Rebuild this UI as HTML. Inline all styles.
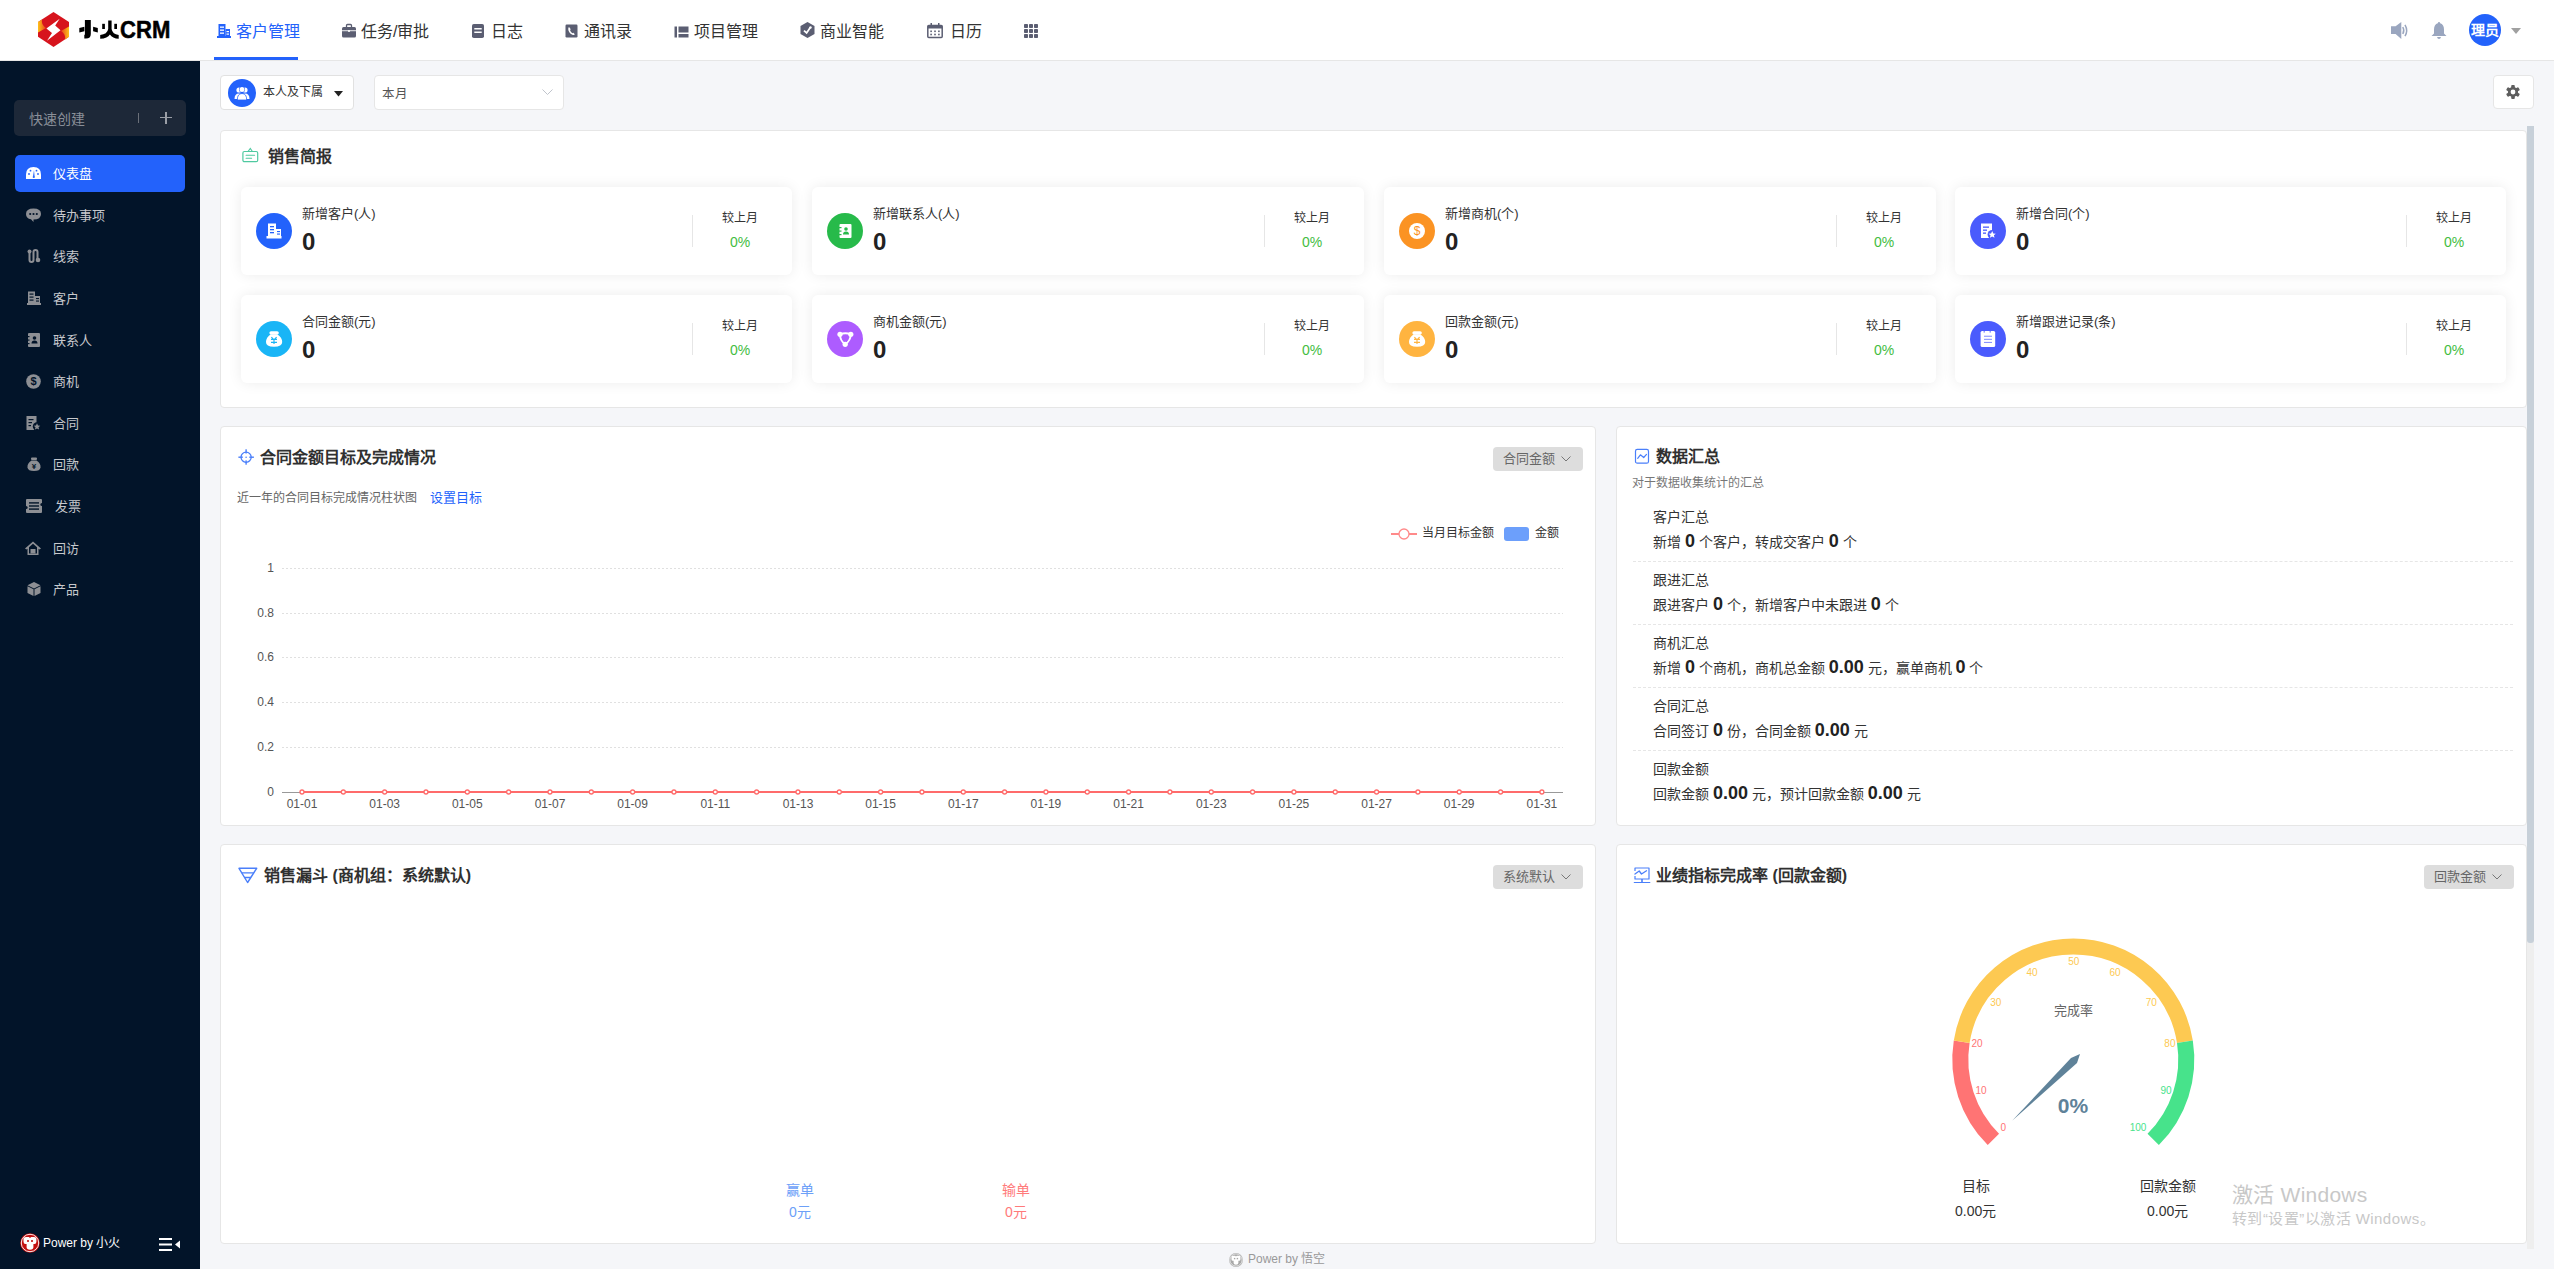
<!DOCTYPE html><html lang="zh-CN"><head><meta charset="utf-8"><style>
*{box-sizing:border-box}
html,body{margin:0;padding:0}
body{width:2554px;height:1269px;overflow:hidden;position:relative;background:#f5f6f9;font-family:"Liberation Sans",sans-serif;}
.t{position:absolute;white-space:nowrap}
.a{position:absolute}
.card{position:absolute;background:#fff;border:1px solid #e6e6e6;border-radius:4px}
.sc{position:absolute;background:#fff;border-radius:6px;box-shadow:0 0 14px rgba(0,0,0,0.08)}
svg{position:absolute;overflow:visible}
</style></head><body>
<div class="a" style="left:0;top:0;width:2554px;height:61px;background:#fff;border-bottom:1px solid #e6e6e6"></div>
<svg style="left:38px;top:12px" width="32" height="35" viewBox="0 0 32 35">
<defs><linearGradient id="lg1" x1="0" y1="0" x2="1" y2="0"><stop offset="0" stop-color="#ffc21a"/><stop offset="1" stop-color="#e8441a"/></linearGradient>
<linearGradient id="lg2" x1="1" y1="0" x2="0" y2="0"><stop offset="0" stop-color="#ffc21a"/><stop offset="1" stop-color="#e8441a"/></linearGradient></defs>
<polygon points="15.5,0 31,10 31,24.7 15.5,35 0,24.7 0,10" fill="#d7141d"/>
<path d="M0,10 L4,7.5 Q3,13 8,16 L0,20.5 Z" fill="url(#lg1)"/>
<path d="M31,24.7 L27,27.5 Q28,22 23,19 L31,14.5 Z" fill="url(#lg2)"/>
<polygon points="21.7,6.8 8.4,16.5 14,21 9,28.8 22.5,18.2 17.2,13.5" fill="#fff"/>
</svg>
<svg style="left:79px;top:20px" width="42" height="20" viewBox="0 0 42 20"><g fill="#000">
<path d="M5.9,0 H11.8 V14 Q11.8,18.6 7,18.6 H5.3 V14.8 H5.9 Z"/>
<polygon points="0.3,8 5.4,6.7 5.4,11.2 0.3,12.6"/><polygon points="14.1,6.7 18.8,8 18.8,12.6 14.1,11.2"/>
<rect x="23.2" y="3.8" width="2.7" height="5.2"/><rect x="35.3" y="3.8" width="2.7" height="5.2"/>
<path d="M29.2,0.4 H32.6 V9 Q33.5,14.3 39.7,15 V18.8 Q33.5,18.5 30.9,14.5 Q28.5,18.5 21.2,18.8 V15 Q28.3,14.3 29.2,9 Z"/></g></svg>
<div class="t" style="left:120px;top:15px;font-size:24px;line-height:30px;color:#000;font-weight:bold;transform:scaleX(0.92);transform-origin:0 0;-webkit-text-stroke:0.5px #000">CRM</div>
<svg style="left:217px;top:24px" width="14" height="14" viewBox="0 0 14 14">
<rect x="1.5" y="0" width="7" height="12.5" fill="#2362fb"/><rect x="8.5" y="5" width="4.5" height="7.5" fill="#2362fb"/><rect x="0" y="12" width="14" height="2" fill="#2362fb"/>
<rect x="3" y="2.5" width="4" height="1.3" fill="#fff"/><rect x="3" y="5.5" width="4" height="1.3" fill="#fff"/><rect x="3" y="8.5" width="4" height="1.3" fill="#fff"/>
<rect x="9.5" y="7" width="2.5" height="1.2" fill="#fff"/><rect x="9.5" y="9.5" width="2.5" height="1.2" fill="#fff"/></svg>
<div class="t" style="left:236px;top:24px;font-size:16px;line-height:16px;color:#2362fb;font-weight:normal;">客户管理</div>
<div class="a" style="left:214px;top:57px;width:84px;height:3px;background:#2362fb"></div>
<svg style="left:341.5px;top:24px" width="14" height="14" viewBox="0 0 14 14">
<path d="M4.5,3 V1.5 Q4.5,0.5 5.5,0.5 H8.5 Q9.5,0.5 9.5,1.5 V3" stroke="#5b5e72" stroke-width="1.3" fill="none"/>
<rect x="0" y="3" width="14" height="10.5" rx="1.5" fill="#5b5e72"/><rect x="0" y="6.3" width="14" height="0.9" fill="#fff"/><circle cx="7" cy="7" r="1.1" fill="#fff"/></svg>
<div class="t" style="left:361px;top:24px;font-size:16px;line-height:16px;color:#333;font-weight:normal;">任务/审批</div>
<svg style="left:472px;top:24px" width="12" height="14" viewBox="0 0 12 14">
<rect x="0" y="0" width="12" height="14" rx="1.8" fill="#5b5e72"/><rect x="2.3" y="4" width="7.4" height="1.5" fill="#fff"/><rect x="2.3" y="7.5" width="7.4" height="1.5" fill="#fff"/></svg>
<div class="t" style="left:491px;top:24px;font-size:16px;line-height:16px;color:#333;font-weight:normal;">日志</div>
<svg style="left:565px;top:24px" width="13" height="14" viewBox="0 0 13 14">
<rect x="0.5" y="0.5" width="12" height="13" rx="1.2" fill="#5b5e72"/>
<path d="M4,3 Q3,3.5 3.3,6 Q4.5,10 8,11 Q9.5,11.2 9.8,10.3 L8.3,8.7 L7.3,9.3 Q5.5,8 5,6 L5.8,5.2 Z" fill="#fff"/></svg>
<div class="t" style="left:584px;top:24px;font-size:16px;line-height:16px;color:#333;font-weight:normal;">通讯录</div>
<svg style="left:673.5px;top:24px" width="15" height="14" viewBox="0 0 15 14">
<rect x="0.5" y="2.5" width="2.5" height="11" fill="#5b5e72"/><rect x="4.5" y="2.5" width="10" height="6" fill="#5b5e72"/><rect x="4.5" y="10" width="10" height="3.5" fill="#5b5e72"/></svg>
<div class="t" style="left:694px;top:24px;font-size:16px;line-height:16px;color:#333;font-weight:normal;">项目管理</div>
<svg style="left:800px;top:22px" width="15" height="16" viewBox="0 0 15 16">
<polygon points="7.5,0 14.5,4 14.5,12 7.5,16 0.5,12 0.5,4" fill="#5b5e72"/><path d="M4,8.6 L6.6,11 L10.3,5.6" stroke="#fff" stroke-width="1.8" fill="none"/><circle cx="10.5" cy="5.4" r="1.2" fill="#fff"/></svg>
<div class="t" style="left:820px;top:24px;font-size:16px;line-height:16px;color:#333;font-weight:normal;">商业智能</div>
<svg style="left:927px;top:23px" width="16" height="15" viewBox="0 0 16 15">
<rect x="0.8" y="2.5" width="14.4" height="12" rx="1" stroke="#5b5e72" stroke-width="1.5" fill="none"/>
<rect x="0.8" y="2.5" width="14.4" height="3" fill="#5b5e72"/><rect x="3.5" y="0" width="1.5" height="3.5" fill="#5b5e72"/><rect x="11" y="0" width="1.5" height="3.5" fill="#5b5e72"/>
<g fill="#5b5e72"><rect x="3.3" y="7.5" width="1.6" height="1.6"/><rect x="7.2" y="7.5" width="1.6" height="1.6"/><rect x="11.1" y="7.5" width="1.6" height="1.6"/>
<rect x="3.3" y="10.7" width="1.6" height="1.6"/><rect x="7.2" y="10.7" width="1.6" height="1.6"/><rect x="11.1" y="10.7" width="1.6" height="1.6"/></g></svg>
<div class="t" style="left:950px;top:24px;font-size:16px;line-height:16px;color:#333;font-weight:normal;">日历</div>
<svg style="left:1023.5px;top:24px" width="14" height="14" viewBox="0 0 14 14"><rect x="0" y="0" width="4" height="4" rx="0.8" fill="#5b5e72"/><rect x="0" y="5" width="4" height="4" rx="0.8" fill="#5b5e72"/><rect x="0" y="10" width="4" height="4" rx="0.8" fill="#5b5e72"/><rect x="5" y="0" width="4" height="4" rx="0.8" fill="#5b5e72"/><rect x="5" y="5" width="4" height="4" rx="0.8" fill="#5b5e72"/><rect x="5" y="10" width="4" height="4" rx="0.8" fill="#5b5e72"/><rect x="10" y="0" width="4" height="4" rx="0.8" fill="#5b5e72"/><rect x="10" y="5" width="4" height="4" rx="0.8" fill="#5b5e72"/><rect x="10" y="10" width="4" height="4" rx="0.8" fill="#5b5e72"/></svg>
<svg style="left:2390.5px;top:22px" width="18" height="17" viewBox="0 0 18 17">
<path d="M0,4.3 H4.6 L10.3,0 V17 L4.6,11.9 H0 Z" fill="#9aa6bf"/>
<path d="M11.8,5 Q13.8,8.5 11.8,12" stroke="#9aa6bf" stroke-width="1.5" fill="none"/><path d="M14,2.8 Q17.3,8.5 14,14.2" stroke="#9aa6bf" stroke-width="1.5" fill="none"/></svg>
<svg style="left:2431px;top:22px" width="16" height="17" viewBox="0 0 16 17">
<path d="M8,0 Q9,0 9.2,1.3 Q13,2.5 13,7.5 V11.5 L15.5,14 H0.5 L3,11.5 V7.5 Q3,2.5 6.8,1.3 Q7,0 8,0 Z" fill="#9aa6bf"/><path d="M6,15 H10 Q9.5,17 8,17 Q6.5,17 6,15 Z" fill="#9aa6bf"/></svg>
<div class="a" style="left:2469px;top:14px;width:32px;height:32px;border-radius:50%;background:#2362fb"></div>
<div class="t" style="left:2471px;top:23px;font-size:14px;line-height:14px;color:#fff;font-weight:normal;font-weight:bold">理员</div>
<svg style="left:2511px;top:28px" width="10" height="6" viewBox="0 0 10 6"><polygon points="0,0 10,0 5,6" fill="#a0a0a0"/></svg>
<div class="a" style="left:0;top:61px;width:200px;height:1208px;background:#021429"></div>
<div class="a" style="left:14px;top:100px;width:172px;height:36px;background:#1d2838;border-radius:5px"></div>
<div class="t" style="left:29px;top:112px;font-size:14px;line-height:14px;color:#8a8f98;font-weight:normal;">快速创建</div>
<div class="a" style="left:138px;top:113px;width:1px;height:10px;background:#6b7079"></div>
<div class="a" style="left:160px;top:117px;width:12px;height:1.3px;background:#9a9ea6"></div>
<div class="a" style="left:165.4px;top:111.5px;width:1.3px;height:12px;background:#9a9ea6"></div>
<div class="a" style="left:15px;top:155px;width:170px;height:37px;background:#2362fb;border-radius:5px"></div>
<div class="t" style="left:53px;top:167px;font-size:13px;line-height:13px;color:#fff;font-weight:normal;">仪表盘</div>
<svg style="left:26px;top:167px" width="15" height="12" viewBox="0 0 15 12">
<path d="M0,12 V7.5 Q0,0 7.5,0 Q15,0 15,7.5 V12 Z" fill="#fff"/><g fill="#2362fb"><circle cx="3" cy="7" r="0.9"/><circle cx="4.5" cy="3.7" r="0.9"/><circle cx="10.5" cy="3.7" r="0.9"/><circle cx="12" cy="7" r="0.9"/>
<path d="M7,9.5 L8,3 L8.6,9.6 Z"/><circle cx="7.8" cy="10" r="1.1"/></g></svg>
<div class="t" style="left:53px;top:209px;font-size:13px;line-height:13px;color:#c6c8cc;font-weight:normal;">待办事项</div>
<svg style="left:26px;top:208px" width="15" height="14" viewBox="0 0 15 14">
<path d="M7.5,0.5 Q15,0.5 15,6 Q15,11.5 7.5,11.5 L7.5,14 L5,11.3 Q0,10.5 0,6 Q0,0.5 7.5,0.5 Z" fill="#8d8f94"/><g fill="#021429"><circle cx="4.2" cy="6" r="1.1"/><circle cx="7.5" cy="6" r="1.1"/><circle cx="10.8" cy="6" r="1.1"/></g></svg>
<div class="t" style="left:53px;top:250px;font-size:13px;line-height:13px;color:#c6c8cc;font-weight:normal;">线索</div>
<svg style="left:27px;top:249px" width="14" height="14" viewBox="0 0 14 14">
<path d="M2.5,3 V11 Q2.5,13 4.5,13 Q6.5,13 6.5,11 V3 Q6.5,1 8.5,1 Q10.5,1 10.5,3 V10" stroke="#8d8f94" stroke-width="2" fill="none"/><circle cx="2.5" cy="2.5" r="2" fill="#8d8f94"/><circle cx="11" cy="11" r="2.3" fill="#8d8f94"/></svg>
<div class="t" style="left:53px;top:292px;font-size:13px;line-height:13px;color:#c6c8cc;font-weight:normal;">客户</div>
<svg style="left:27px;top:291px" width="14" height="14" viewBox="0 0 14 14">
<rect x="1" y="0.5" width="7" height="12" fill="#8d8f94"/><rect x="8" y="5" width="5" height="7.5" fill="#8d8f94"/><rect x="0" y="12" width="14" height="2" fill="#8d8f94"/>
<g fill="#021429"><rect x="2.5" y="2.5" width="4" height="1.2"/><rect x="2.5" y="5.5" width="4" height="1.2"/><rect x="2.5" y="8.5" width="4" height="1.2"/><rect x="9" y="7" width="3" height="1.1"/><rect x="9" y="9.5" width="3" height="1.1"/></g></svg>
<div class="t" style="left:53px;top:334px;font-size:13px;line-height:13px;color:#c6c8cc;font-weight:normal;">联系人</div>
<svg style="left:27px;top:333px" width="13" height="14" viewBox="0 0 13 14">
<rect x="1" y="0" width="12" height="14" rx="1" fill="#8d8f94"/><g fill="#021429"><rect x="0" y="3" width="2.5" height="1.2"/><rect x="0" y="6.5" width="2.5" height="1.2"/><rect x="0" y="10" width="2.5" height="1.2"/>
<circle cx="7.5" cy="5" r="1.8"/><path d="M4.5,10.5 Q4.5,7.5 7.5,7.5 Q10.5,7.5 10.5,10.5 Z"/></g></svg>
<div class="t" style="left:53px;top:375px;font-size:13px;line-height:13px;color:#c6c8cc;font-weight:normal;">商机</div>
<svg style="left:26px;top:374px" width="15" height="15" viewBox="0 0 15 15">
<circle cx="7.5" cy="7.5" r="7.3" fill="#8d8f94"/><text x="7.5" y="11.3" font-size="11" font-family="Liberation Sans" text-anchor="middle" fill="#021429" font-weight="bold">$</text></svg>
<div class="t" style="left:53px;top:417px;font-size:13px;line-height:13px;color:#c6c8cc;font-weight:normal;">合同</div>
<svg style="left:26px;top:416px" width="15" height="14" viewBox="0 0 15 14">
<rect x="0.5" y="0" width="10" height="14" fill="#8d8f94"/><g fill="#021429"><rect x="2.5" y="3" width="5" height="1.2"/><rect x="2.5" y="6" width="3.5" height="1.2"/><rect x="2.5" y="9" width="2.5" height="1.2"/></g>
<circle cx="11" cy="10.5" r="4.2" fill="#021429"/><polygon points="11,7.3 12,9.6 14.3,9.8 12.5,11.3 13.1,13.6 11,12.4 8.9,13.6 9.5,11.3 7.7,9.8 10,9.6" fill="#8d8f94"/></svg>
<div class="t" style="left:53px;top:458px;font-size:13px;line-height:13px;color:#c6c8cc;font-weight:normal;">回款</div>
<svg style="left:27px;top:457px" width="14" height="14" viewBox="0 0 14 14">
<rect x="4" y="0.5" width="6" height="2.5" rx="1" fill="#8d8f94"/><path d="M4.5,3.5 H9.5 Q14,6.5 13.5,10.5 Q13,14 7,14 Q1,14 0.5,10.5 Q0,6.5 4.5,3.5 Z" fill="#8d8f94"/>
<text x="7" y="12" font-size="8" font-family="Liberation Sans" text-anchor="middle" fill="#021429" font-weight="bold">¥</text></svg>
<div class="t" style="left:55px;top:500px;font-size:13px;line-height:13px;color:#c6c8cc;font-weight:normal;">发票</div>
<svg style="left:26px;top:499px" width="16" height="14" viewBox="0 0 16 14">
<path d="M1,0 H15 Q16,0 16,1 V4 Q14.3,4 14.3,5.5 Q14.3,7 16,7 V13 Q16,14 15,14 H1 Q0,14 0,13 V10 Q1.7,10 1.7,8.5 Q1.7,7 0,7 V1 Q0,0 1,0 Z" fill="#8d8f94"/>
<g fill="#021429"><rect x="3" y="3.2" width="10" height="1.4"/><rect x="3" y="6.3" width="10" height="1.4"/><rect x="3" y="9.4" width="10" height="1.4"/></g></svg>
<div class="t" style="left:53px;top:542px;font-size:13px;line-height:13px;color:#c6c8cc;font-weight:normal;">回访</div>
<svg style="left:25px;top:541px" width="16" height="14" viewBox="0 0 16 14">
<path d="M8,0.5 L16,7.5 L14.5,8.5 L13.5,7.7 V14 H2.5 V7.7 L1.5,8.5 L0,7.5 Z" fill="#8d8f94"/><path d="M8,2.8 L12,6.3 V12.5 H4 V6.3 Z" fill="#021429"/><rect x="5.5" y="8" width="5" height="4.5" fill="#8d8f94"/></svg>
<div class="t" style="left:53px;top:583px;font-size:13px;line-height:13px;color:#c6c8cc;font-weight:normal;">产品</div>
<svg style="left:27px;top:582px" width="14" height="14" viewBox="0 0 14 14">
<polygon points="7,0 13.5,3.2 7,6.5 0.5,3.2" fill="#8d8f94"/><polygon points="0.5,4.2 6.5,7.3 6.5,14 0.5,11" fill="#8d8f94"/><polygon points="13.5,4.2 7.5,7.3 7.5,14 13.5,11" fill="#8d8f94"/></svg>
<svg style="left:20px;top:1233px" width="20" height="20" viewBox="0 0 20 20">
<circle cx="10" cy="10" r="9.85" fill="#c4100f"/><circle cx="10" cy="10" r="8.7" fill="none" stroke="#fff" stroke-width="0.9"/>
<path d="M3.5,5.8 Q3.5,3.9 6,3.9 H8.8 L10,4.9 L11.2,3.9 H14 Q16.4,3.9 16.4,5.8 V8.8 Q16.4,11 14.4,11 H13.4 V14.3 Q13.4,16.7 10,16.7 Q6.6,16.7 6.6,14.3 V11 H5.5 Q3.5,11 3.5,8.8 Z" fill="#fff"/>
<rect x="7" y="7" width="2" height="2" fill="#c4100f" fill-opacity="0.8"/><rect x="11" y="7" width="2" height="2" fill="#c4100f" fill-opacity="0.8"/></svg>
<div class="t" style="left:43px;top:1237px;font-size:12px;line-height:12px;color:#fff;font-weight:normal;">Power by 小火</div>
<svg style="left:159px;top:1238px" width="22" height="13" viewBox="0 0 22 13">
<rect x="0" y="0" width="13" height="2" fill="#fff"/><rect x="0" y="5.5" width="13" height="2" fill="#fff"/><rect x="0" y="11" width="13" height="2" fill="#fff"/><polygon points="21,2.5 21,10.5 16,6.5" fill="#fff"/></svg>
<div class="a" style="left:220px;top:75px;width:134px;height:35px;background:#fff;border:1px solid #e1e1e1;border-radius:4px"></div>
<div class="a" style="left:228px;top:79px;width:28px;height:28px;border-radius:50%;background:#2362fb"></div>
<svg style="left:234px;top:86px" width="16" height="14" viewBox="0 0 16 14">
<circle cx="5" cy="4" r="2.6" fill="#fff"/><circle cx="11" cy="4" r="2.6" fill="#fff"/><path d="M0.5,13 Q0.5,7.5 5,7.5 Q9.5,7.5 9.5,13 Z" fill="#fff"/><path d="M6.5,13 Q6.5,7.5 11,7.5 Q15.5,7.5 15.5,13 Z" fill="#fff"/>
<circle cx="8" cy="3.6" r="3" fill="#2362fb"/><circle cx="8" cy="3.6" r="2.5" fill="#fff"/><path d="M3.3,14 Q3.3,7.5 8,7.5 Q12.7,7.5 12.7,14 Z" fill="#fff" stroke="#2362fb" stroke-width="0.8"/></svg>
<div class="t" style="left:263px;top:86px;font-size:12px;line-height:12px;color:#333;font-weight:normal;">本人及下属</div>
<svg style="left:334px;top:91px" width="10" height="6" viewBox="0 0 10 6"><polygon points="0,0 9,0 4.5,5.5" fill="#222"/></svg>
<div class="a" style="left:374px;top:75px;width:190px;height:35px;background:#fff;border:1px solid #e6e6e6;border-radius:4px"></div>
<div class="t" style="left:382px;top:88px;font-size:12.5px;line-height:12.5px;color:#555;font-weight:normal;">本月</div>
<svg style="left:542px;top:89px" width="11" height="7" viewBox="0 0 11 7"><path d="M0.5,0.5 L5.5,5.5 L10.5,0.5" stroke="#c0c4cc" stroke-width="1" fill="none"/></svg>
<div class="a" style="left:2493px;top:75px;width:41px;height:34px;background:#fff;border:1px solid #e6e6e6;border-radius:4px"></div>
<svg style="left:2506px;top:85px" width="14" height="14" viewBox="0 0 14 14"><g fill="#5e5e5e">
<circle cx="7" cy="7" r="5.1"/><rect x="5.2" y="0" width="3.6" height="4" rx="0.9" transform="rotate(0 7 7)"/><rect x="5.2" y="0" width="3.6" height="4" rx="0.9" transform="rotate(60 7 7)"/><rect x="5.2" y="0" width="3.6" height="4" rx="0.9" transform="rotate(120 7 7)"/><rect x="5.2" y="0" width="3.6" height="4" rx="0.9" transform="rotate(180 7 7)"/><rect x="5.2" y="0" width="3.6" height="4" rx="0.9" transform="rotate(240 7 7)"/><rect x="5.2" y="0" width="3.6" height="4" rx="0.9" transform="rotate(300 7 7)"/></g><circle cx="7" cy="7" r="2.4" fill="#fff"/></svg>
<div class="a" style="left:2527px;top:940px;width:7px;height:309px;background:#eeeeee"></div>
<div class="a" style="left:2527px;top:126px;width:7px;height:817px;background:#c7d0d9;border-radius:0 0 3px 3px"></div>
<div class="card" style="left:220px;top:130px;width:2307px;height:278px"></div>
<svg style="left:242px;top:148px" width="17" height="15" viewBox="0 0 17 15">
<rect x="0.9" y="3.5" width="14.8" height="10.2" rx="1.5" stroke="#4fc9a0" stroke-width="1.2" fill="none"/><path d="M6,3.5 L8.3,0.4 L10.4,3.5" stroke="#4fc9a0" stroke-width="1.1" fill="none"/>
<path d="M4.1,7.2 H12.6 M4.1,10.3 H9.6" stroke="#4fc9a0" stroke-width="1.1" stroke-linecap="round"/></svg>
<div class="t" style="left:268px;top:149px;font-size:16px;line-height:16px;color:#303030;font-weight:bold;">销售简报</div>
<div class="sc" style="left:241px;top:187px;width:551px;height:88px"></div>
<div class="a" style="left:256px;top:213px;width:36px;height:36px;border-radius:50%;background:#2362fb"></div>
<svg style="left:266px;top:223px" width="16" height="16" viewBox="0 0 16 16">
<rect x="2" y="0.5" width="8" height="13" fill="#fff"/><rect x="10" y="6" width="5" height="7.5" fill="#fff"/><rect x="0.5" y="13" width="15" height="2.5" fill="#fff"/>
<g fill="#2362fb"><rect x="4" y="3" width="4" height="1.3"/><rect x="4" y="6" width="4" height="1.3"/><rect x="4" y="9" width="4" height="1.3"/><rect x="11" y="8" width="3" height="1.1"/><rect x="11" y="10.5" width="3" height="1.1"/></g></svg>
<div class="t" style="left:302px;top:207px;font-size:13px;line-height:13px;color:#333;font-weight:normal;">新增客户(人)</div>
<div class="t" style="left:302px;top:230px;font-size:24px;line-height:24px;color:#222;font-weight:bold;">0</div>
<div class="a" style="left:692px;top:215px;width:1px;height:32px;background:#e6e6e6"></div>
<div class="t" style="left:722px;top:212px;font-size:12px;line-height:12px;color:#333;font-weight:normal;">较上月</div>
<div class="t" style="left:730px;top:235px;font-size:14px;line-height:14px;color:#44bd3f;font-weight:normal;">0%</div>
<div class="sc" style="left:812px;top:187px;width:552px;height:88px"></div>
<div class="a" style="left:827px;top:213px;width:36px;height:36px;border-radius:50%;background:#27ba4a"></div>
<svg style="left:837px;top:223px" width="16" height="16" viewBox="0 0 16 16">
<rect x="2.5" y="1" width="12" height="14" rx="1" fill="#fff"/><g fill="#27ba4a"><rect x="1.5" y="4" width="3" height="1.2"/><rect x="1.5" y="7.5" width="3" height="1.2"/><rect x="1.5" y="11" width="3" height="1.2"/>
<circle cx="9" cy="6" r="1.8"/><path d="M6,11.5 Q6,8.5 9,8.5 Q12,8.5 12,11.5 Z"/></g></svg>
<div class="t" style="left:873px;top:207px;font-size:13px;line-height:13px;color:#333;font-weight:normal;">新增联系人(人)</div>
<div class="t" style="left:873px;top:230px;font-size:24px;line-height:24px;color:#222;font-weight:bold;">0</div>
<div class="a" style="left:1264px;top:215px;width:1px;height:32px;background:#e6e6e6"></div>
<div class="t" style="left:1294px;top:212px;font-size:12px;line-height:12px;color:#333;font-weight:normal;">较上月</div>
<div class="t" style="left:1302px;top:235px;font-size:14px;line-height:14px;color:#44bd3f;font-weight:normal;">0%</div>
<div class="sc" style="left:1384px;top:187px;width:552px;height:88px"></div>
<div class="a" style="left:1399px;top:213px;width:36px;height:36px;border-radius:50%;background:#fb9323"></div>
<svg style="left:1409px;top:223px" width="16" height="16" viewBox="0 0 16 16">
<circle cx="8" cy="8" r="8" fill="#fff"/><text x="8" y="12.3" font-size="12" font-family="Liberation Sans" text-anchor="middle" fill="#fb9323">$</text></svg>
<div class="t" style="left:1445px;top:207px;font-size:13px;line-height:13px;color:#333;font-weight:normal;">新增商机(个)</div>
<div class="t" style="left:1445px;top:230px;font-size:24px;line-height:24px;color:#222;font-weight:bold;">0</div>
<div class="a" style="left:1836px;top:215px;width:1px;height:32px;background:#e6e6e6"></div>
<div class="t" style="left:1866px;top:212px;font-size:12px;line-height:12px;color:#333;font-weight:normal;">较上月</div>
<div class="t" style="left:1874px;top:235px;font-size:14px;line-height:14px;color:#44bd3f;font-weight:normal;">0%</div>
<div class="sc" style="left:1955px;top:187px;width:551px;height:88px"></div>
<div class="a" style="left:1970px;top:213px;width:36px;height:36px;border-radius:50%;background:#4a5bfd"></div>
<svg style="left:1980px;top:223px" width="17" height="16" viewBox="0 0 17 16">
<rect x="1" y="0.5" width="11" height="14.5" fill="#fff"/><g fill="#4a5bfd"><rect x="3" y="3.5" width="6" height="1.3"/><rect x="3" y="6.5" width="4" height="1.3"/><rect x="3" y="9.5" width="3" height="1.3"/></g>
<circle cx="12.2" cy="11.5" r="4.6" fill="#4a5bfd"/><polygon points="12.2,8 13.3,10.5 15.8,10.7 13.9,12.3 14.5,14.8 12.2,13.5 9.9,14.8 10.5,12.3 8.6,10.7 11.1,10.5" fill="#fff"/></svg>
<div class="t" style="left:2016px;top:207px;font-size:13px;line-height:13px;color:#333;font-weight:normal;">新增合同(个)</div>
<div class="t" style="left:2016px;top:230px;font-size:24px;line-height:24px;color:#222;font-weight:bold;">0</div>
<div class="a" style="left:2406px;top:215px;width:1px;height:32px;background:#e6e6e6"></div>
<div class="t" style="left:2436px;top:212px;font-size:12px;line-height:12px;color:#333;font-weight:normal;">较上月</div>
<div class="t" style="left:2444px;top:235px;font-size:14px;line-height:14px;color:#44bd3f;font-weight:normal;">0%</div>
<div class="sc" style="left:241px;top:295px;width:551px;height:88px"></div>
<div class="a" style="left:256px;top:321px;width:36px;height:36px;border-radius:50%;background:#19b5f6"></div>
<svg style="left:266px;top:331px" width="17" height="17" viewBox="0 0 17 17">
<path d="M5,0.2 H11.2 Q12.8,0.2 12.8,1.7 Q12.8,3 11.5,3.6 H4.6 Q3.4,3 3.4,1.7 Q3.4,0.2 5,0.2 Z" fill="#fff"/>
<path d="M4.8,3.2 H11.2 Q16.2,6.5 16.2,11 Q16.2,15.8 8,15.8 Q-0.2,15.8 0,11 Q0,6.5 4.8,3.2 Z" fill="#fff"/>
<path d="M5.4,6.2 L8,9 L10.6,6.2 M8,9 V13 M5,8.3 H11 M5,11.3 H11" stroke="#19b5f6" stroke-width="1.15" fill="none"/></svg>
<div class="t" style="left:302px;top:315px;font-size:13px;line-height:13px;color:#333;font-weight:normal;">合同金额(元)</div>
<div class="t" style="left:302px;top:338px;font-size:24px;line-height:24px;color:#222;font-weight:bold;">0</div>
<div class="a" style="left:692px;top:323px;width:1px;height:32px;background:#e6e6e6"></div>
<div class="t" style="left:722px;top:320px;font-size:12px;line-height:12px;color:#333;font-weight:normal;">较上月</div>
<div class="t" style="left:730px;top:343px;font-size:14px;line-height:14px;color:#44bd3f;font-weight:normal;">0%</div>
<div class="sc" style="left:812px;top:295px;width:552px;height:88px"></div>
<div class="a" style="left:827px;top:321px;width:36px;height:36px;border-radius:50%;background:#ad5cff"></div>
<svg style="left:837px;top:331px" width="16" height="16" viewBox="0 0 16 16">
<path d="M3,3.3 Q8.4,1.2 13.8,3.3 Q13.6,9.8 8.2,13.3 Q3,9.8 3,3.3 Z" fill="none" stroke="#fff" stroke-width="1.8"/>
<circle cx="3" cy="3.3" r="2.6" fill="#fff"/><circle cx="13.8" cy="3.3" r="2.6" fill="#fff"/><circle cx="8.2" cy="13.3" r="2.6" fill="#fff"/></svg>
<div class="t" style="left:873px;top:315px;font-size:13px;line-height:13px;color:#333;font-weight:normal;">商机金额(元)</div>
<div class="t" style="left:873px;top:338px;font-size:24px;line-height:24px;color:#222;font-weight:bold;">0</div>
<div class="a" style="left:1264px;top:323px;width:1px;height:32px;background:#e6e6e6"></div>
<div class="t" style="left:1294px;top:320px;font-size:12px;line-height:12px;color:#333;font-weight:normal;">较上月</div>
<div class="t" style="left:1302px;top:343px;font-size:14px;line-height:14px;color:#44bd3f;font-weight:normal;">0%</div>
<div class="sc" style="left:1384px;top:295px;width:552px;height:88px"></div>
<div class="a" style="left:1399px;top:321px;width:36px;height:36px;border-radius:50%;background:#ffb440"></div>
<svg style="left:1409px;top:331px" width="17" height="17" viewBox="0 0 17 17">
<path d="M5,0.2 H11.2 Q12.8,0.2 12.8,1.7 Q12.8,3 11.5,3.6 H4.6 Q3.4,3 3.4,1.7 Q3.4,0.2 5,0.2 Z" fill="#fff"/>
<path d="M4.8,3.2 H11.2 Q16.2,6.5 16.2,11 Q16.2,15.8 8,15.8 Q-0.2,15.8 0,11 Q0,6.5 4.8,3.2 Z" fill="#fff"/>
<path d="M5.4,6.2 L8,9 L10.6,6.2 M8,9 V13 M5,8.3 H11 M5,11.3 H11" stroke="#ffb440" stroke-width="1.15" fill="none"/></svg>
<div class="t" style="left:1445px;top:315px;font-size:13px;line-height:13px;color:#333;font-weight:normal;">回款金额(元)</div>
<div class="t" style="left:1445px;top:338px;font-size:24px;line-height:24px;color:#222;font-weight:bold;">0</div>
<div class="a" style="left:1836px;top:323px;width:1px;height:32px;background:#e6e6e6"></div>
<div class="t" style="left:1866px;top:320px;font-size:12px;line-height:12px;color:#333;font-weight:normal;">较上月</div>
<div class="t" style="left:1874px;top:343px;font-size:14px;line-height:14px;color:#44bd3f;font-weight:normal;">0%</div>
<div class="sc" style="left:1955px;top:295px;width:551px;height:88px"></div>
<div class="a" style="left:1970px;top:321px;width:36px;height:36px;border-radius:50%;background:#4a5bfd"></div>
<svg style="left:1980px;top:331px" width="16" height="16" viewBox="0 0 16 16">
<rect x="0.6" y="0" width="14.6" height="16" rx="1.6" fill="#fff"/><rect x="3.7" y="0" width="0.9" height="1.6" fill="#4a5bfd"/><rect x="9.7" y="0" width="0.9" height="1.6" fill="#4a5bfd"/>
<g fill="#4a5bfd" fill-opacity="0.65"><rect x="4" y="4.7" width="8" height="1.1"/><rect x="4" y="7.8" width="8" height="1.1"/><rect x="4" y="10.9" width="8" height="1.1"/></g></svg>
<div class="t" style="left:2016px;top:315px;font-size:13px;line-height:13px;color:#333;font-weight:normal;">新增跟进记录(条)</div>
<div class="t" style="left:2016px;top:338px;font-size:24px;line-height:24px;color:#222;font-weight:bold;">0</div>
<div class="a" style="left:2406px;top:323px;width:1px;height:32px;background:#e6e6e6"></div>
<div class="t" style="left:2436px;top:320px;font-size:12px;line-height:12px;color:#333;font-weight:normal;">较上月</div>
<div class="t" style="left:2444px;top:343px;font-size:14px;line-height:14px;color:#44bd3f;font-weight:normal;">0%</div>
<div class="card" style="left:220px;top:426px;width:1376px;height:400px"></div>
<svg style="left:238px;top:449px" width="16" height="16" viewBox="0 0 16 16"><g fill="#4a7ffa">
<circle cx="8.1" cy="8.2" r="5.1" stroke="#4a7ffa" stroke-width="1.3" fill="none"/><rect x="7.4" y="0.3" width="1.4" height="4.2"/><rect x="7.4" y="11.4" width="1.4" height="4.3"/>
<rect x="0.4" y="7.5" width="4.4" height="1.4"/><rect x="11.3" y="7.5" width="4.6" height="1.4"/><circle cx="8.1" cy="8.2" r="0.8"/></g></svg>
<div class="t" style="left:260px;top:450px;font-size:16px;line-height:16px;color:#303030;font-weight:bold;">合同金额目标及完成情况</div>
<div class="a" style="left:1493px;top:447px;width:90px;height:24px;background:#dddddd;border-radius:4px"></div>
<div class="t" style="left:1503px;top:452px;font-size:13px;line-height:13px;color:#666;font-weight:normal;">合同金额</div>
<svg style="left:1561px;top:456px" width="10" height="6" viewBox="0 0 10 6"><path d="M0.5,0.5 L5,5 L9.5,0.5" stroke="#777" stroke-width="1" fill="none"/></svg>
<div class="t" style="left:237px;top:492px;font-size:12px;line-height:12px;color:#666;font-weight:normal;">近一年的合同目标完成情况柱状图</div>
<div class="t" style="left:430px;top:491px;font-size:13px;line-height:13px;color:#2362fb;font-weight:normal;">设置目标</div>
<svg style="left:1391px;top:527px" width="27" height="14" viewBox="0 0 27 14">
<rect x="0" y="6" width="26" height="2" fill="#ff8a8a"/><circle cx="13" cy="7" r="5" fill="#fff" stroke="#ff8a8a" stroke-width="1.3"/></svg>
<div class="t" style="left:1422px;top:527px;font-size:12px;line-height:12px;color:#333;font-weight:normal;">当月目标金额</div>
<div class="a" style="left:1504px;top:527px;width:25px;height:14px;background:#6c9ffb;border-radius:3px"></div>
<div class="t" style="left:1535px;top:527px;font-size:12px;line-height:12px;color:#333;font-weight:normal;">金额</div>
<svg style="left:0;top:0" width="2554" height="1269"><line x1="282" y1="568.5" x2="1563" y2="568.5" stroke="#e0e0e0" stroke-width="1" stroke-dasharray="2,2"/><line x1="282" y1="613.5" x2="1563" y2="613.5" stroke="#e0e0e0" stroke-width="1" stroke-dasharray="2,2"/><line x1="282" y1="657.5" x2="1563" y2="657.5" stroke="#e0e0e0" stroke-width="1" stroke-dasharray="2,2"/><line x1="282" y1="702.5" x2="1563" y2="702.5" stroke="#e0e0e0" stroke-width="1" stroke-dasharray="2,2"/><line x1="282" y1="747.5" x2="1563" y2="747.5" stroke="#e0e0e0" stroke-width="1" stroke-dasharray="2,2"/><line x1="282" y1="792.5" x2="1563" y2="792.5" stroke="#999" stroke-width="1"/><line x1="302" y1="792" x2="1542" y2="792" stroke="#ff6b6b" stroke-width="2"/><circle cx="302.00" cy="792" r="2" fill="#fff" stroke="#ff6b6b" stroke-width="1.3"/><circle cx="343.33" cy="792" r="2" fill="#fff" stroke="#ff6b6b" stroke-width="1.3"/><circle cx="384.66" cy="792" r="2" fill="#fff" stroke="#ff6b6b" stroke-width="1.3"/><circle cx="425.99" cy="792" r="2" fill="#fff" stroke="#ff6b6b" stroke-width="1.3"/><circle cx="467.32" cy="792" r="2" fill="#fff" stroke="#ff6b6b" stroke-width="1.3"/><circle cx="508.65" cy="792" r="2" fill="#fff" stroke="#ff6b6b" stroke-width="1.3"/><circle cx="549.98" cy="792" r="2" fill="#fff" stroke="#ff6b6b" stroke-width="1.3"/><circle cx="591.31" cy="792" r="2" fill="#fff" stroke="#ff6b6b" stroke-width="1.3"/><circle cx="632.64" cy="792" r="2" fill="#fff" stroke="#ff6b6b" stroke-width="1.3"/><circle cx="673.97" cy="792" r="2" fill="#fff" stroke="#ff6b6b" stroke-width="1.3"/><circle cx="715.30" cy="792" r="2" fill="#fff" stroke="#ff6b6b" stroke-width="1.3"/><circle cx="756.63" cy="792" r="2" fill="#fff" stroke="#ff6b6b" stroke-width="1.3"/><circle cx="797.96" cy="792" r="2" fill="#fff" stroke="#ff6b6b" stroke-width="1.3"/><circle cx="839.29" cy="792" r="2" fill="#fff" stroke="#ff6b6b" stroke-width="1.3"/><circle cx="880.62" cy="792" r="2" fill="#fff" stroke="#ff6b6b" stroke-width="1.3"/><circle cx="921.95" cy="792" r="2" fill="#fff" stroke="#ff6b6b" stroke-width="1.3"/><circle cx="963.28" cy="792" r="2" fill="#fff" stroke="#ff6b6b" stroke-width="1.3"/><circle cx="1004.61" cy="792" r="2" fill="#fff" stroke="#ff6b6b" stroke-width="1.3"/><circle cx="1045.94" cy="792" r="2" fill="#fff" stroke="#ff6b6b" stroke-width="1.3"/><circle cx="1087.27" cy="792" r="2" fill="#fff" stroke="#ff6b6b" stroke-width="1.3"/><circle cx="1128.60" cy="792" r="2" fill="#fff" stroke="#ff6b6b" stroke-width="1.3"/><circle cx="1169.93" cy="792" r="2" fill="#fff" stroke="#ff6b6b" stroke-width="1.3"/><circle cx="1211.26" cy="792" r="2" fill="#fff" stroke="#ff6b6b" stroke-width="1.3"/><circle cx="1252.59" cy="792" r="2" fill="#fff" stroke="#ff6b6b" stroke-width="1.3"/><circle cx="1293.92" cy="792" r="2" fill="#fff" stroke="#ff6b6b" stroke-width="1.3"/><circle cx="1335.25" cy="792" r="2" fill="#fff" stroke="#ff6b6b" stroke-width="1.3"/><circle cx="1376.58" cy="792" r="2" fill="#fff" stroke="#ff6b6b" stroke-width="1.3"/><circle cx="1417.91" cy="792" r="2" fill="#fff" stroke="#ff6b6b" stroke-width="1.3"/><circle cx="1459.24" cy="792" r="2" fill="#fff" stroke="#ff6b6b" stroke-width="1.3"/><circle cx="1500.57" cy="792" r="2" fill="#fff" stroke="#ff6b6b" stroke-width="1.3"/><circle cx="1541.90" cy="792" r="2" fill="#fff" stroke="#ff6b6b" stroke-width="1.3"/></svg>
<div class="t" style="left:174px;top:562px;width:100px;text-align:right;font-size:12px;line-height:12px;color:#555">1</div>
<div class="t" style="left:174px;top:607px;width:100px;text-align:right;font-size:12px;line-height:12px;color:#555">0.8</div>
<div class="t" style="left:174px;top:651px;width:100px;text-align:right;font-size:12px;line-height:12px;color:#555">0.6</div>
<div class="t" style="left:174px;top:696px;width:100px;text-align:right;font-size:12px;line-height:12px;color:#555">0.4</div>
<div class="t" style="left:174px;top:741px;width:100px;text-align:right;font-size:12px;line-height:12px;color:#555">0.2</div>
<div class="t" style="left:174px;top:786px;width:100px;text-align:right;font-size:12px;line-height:12px;color:#555">0</div>
<div class="t" style="left:262.0px;top:798px;width:80px;text-align:center;font-size:12px;line-height:12px;color:#555">01-01</div>
<div class="t" style="left:344.7px;top:798px;width:80px;text-align:center;font-size:12px;line-height:12px;color:#555">01-03</div>
<div class="t" style="left:427.3px;top:798px;width:80px;text-align:center;font-size:12px;line-height:12px;color:#555">01-05</div>
<div class="t" style="left:510.0px;top:798px;width:80px;text-align:center;font-size:12px;line-height:12px;color:#555">01-07</div>
<div class="t" style="left:592.6px;top:798px;width:80px;text-align:center;font-size:12px;line-height:12px;color:#555">01-09</div>
<div class="t" style="left:675.3px;top:798px;width:80px;text-align:center;font-size:12px;line-height:12px;color:#555">01-11</div>
<div class="t" style="left:758.0px;top:798px;width:80px;text-align:center;font-size:12px;line-height:12px;color:#555">01-13</div>
<div class="t" style="left:840.6px;top:798px;width:80px;text-align:center;font-size:12px;line-height:12px;color:#555">01-15</div>
<div class="t" style="left:923.3px;top:798px;width:80px;text-align:center;font-size:12px;line-height:12px;color:#555">01-17</div>
<div class="t" style="left:1005.9px;top:798px;width:80px;text-align:center;font-size:12px;line-height:12px;color:#555">01-19</div>
<div class="t" style="left:1088.6px;top:798px;width:80px;text-align:center;font-size:12px;line-height:12px;color:#555">01-21</div>
<div class="t" style="left:1171.3px;top:798px;width:80px;text-align:center;font-size:12px;line-height:12px;color:#555">01-23</div>
<div class="t" style="left:1253.9px;top:798px;width:80px;text-align:center;font-size:12px;line-height:12px;color:#555">01-25</div>
<div class="t" style="left:1336.6px;top:798px;width:80px;text-align:center;font-size:12px;line-height:12px;color:#555">01-27</div>
<div class="t" style="left:1419.2px;top:798px;width:80px;text-align:center;font-size:12px;line-height:12px;color:#555">01-29</div>
<div class="t" style="left:1501.9px;top:798px;width:80px;text-align:center;font-size:12px;line-height:12px;color:#555">01-31</div>
<div class="card" style="left:1616px;top:426px;width:911px;height:400px"></div>
<svg style="left:1634px;top:448px" width="16" height="16" viewBox="0 0 16 16">
<rect x="1.5" y="1.4" width="13" height="13.8" rx="1.8" stroke="#4a7ffa" stroke-width="1.2" fill="none"/><path d="M3.7,10.3 L6.4,6.8 L9.7,9.5 L12.5,6.4" stroke="#4a7ffa" stroke-width="1.2" fill="none" stroke-linejoin="round" stroke-linecap="round"/></svg>
<div class="t" style="left:1656px;top:449px;font-size:16px;line-height:16px;color:#303030;font-weight:bold;">数据汇总</div>
<div class="t" style="left:1632px;top:477px;font-size:12px;line-height:12px;color:#777;font-weight:normal;">对于数据收集统计的汇总</div>
<div class="t" style="left:1653px;top:510px;font-size:14px;line-height:14px;color:#333;font-weight:normal;">客户汇总</div>
<div class="t" style="left:1653px;top:530px;font-size:14px;line-height:22px;color:#333">新增 <b style="font-size:18px;font-weight:bold;color:#222;font-family:Liberation Sans">0</b> 个客户，转成交客户 <b style="font-size:18px;font-weight:bold;color:#222;font-family:Liberation Sans">0</b> 个</div>
<div class="a" style="left:1633px;top:561px;width:880px;height:0;border-top:1px dashed #e6e6e6"></div>
<div class="t" style="left:1653px;top:573px;font-size:14px;line-height:14px;color:#333;font-weight:normal;">跟进汇总</div>
<div class="t" style="left:1653px;top:593px;font-size:14px;line-height:22px;color:#333">跟进客户 <b style="font-size:18px;font-weight:bold;color:#222;font-family:Liberation Sans">0</b> 个，新增客户中未跟进 <b style="font-size:18px;font-weight:bold;color:#222;font-family:Liberation Sans">0</b> 个</div>
<div class="a" style="left:1633px;top:624px;width:880px;height:0;border-top:1px dashed #e6e6e6"></div>
<div class="t" style="left:1653px;top:636px;font-size:14px;line-height:14px;color:#333;font-weight:normal;">商机汇总</div>
<div class="t" style="left:1653px;top:656px;font-size:14px;line-height:22px;color:#333">新增 <b style="font-size:18px;font-weight:bold;color:#222;font-family:Liberation Sans">0</b> 个商机，商机总金额 <b style="font-size:18px;font-weight:bold;color:#222;font-family:Liberation Sans">0.00</b> 元，赢单商机 <b style="font-size:18px;font-weight:bold;color:#222;font-family:Liberation Sans">0</b> 个</div>
<div class="a" style="left:1633px;top:687px;width:880px;height:0;border-top:1px dashed #e6e6e6"></div>
<div class="t" style="left:1653px;top:699px;font-size:14px;line-height:14px;color:#333;font-weight:normal;">合同汇总</div>
<div class="t" style="left:1653px;top:719px;font-size:14px;line-height:22px;color:#333">合同签订 <b style="font-size:18px;font-weight:bold;color:#222;font-family:Liberation Sans">0</b> 份，合同金额 <b style="font-size:18px;font-weight:bold;color:#222;font-family:Liberation Sans">0.00</b> 元</div>
<div class="a" style="left:1633px;top:750px;width:880px;height:0;border-top:1px dashed #e6e6e6"></div>
<div class="t" style="left:1653px;top:762px;font-size:14px;line-height:14px;color:#333;font-weight:normal;">回款金额</div>
<div class="t" style="left:1653px;top:782px;font-size:14px;line-height:22px;color:#333">回款金额 <b style="font-size:18px;font-weight:bold;color:#222;font-family:Liberation Sans">0.00</b> 元，预计回款金额 <b style="font-size:18px;font-weight:bold;color:#222;font-family:Liberation Sans">0.00</b> 元</div>
<div class="card" style="left:220px;top:844px;width:1376px;height:400px"></div>
<svg style="left:238px;top:867px" width="20" height="17" viewBox="0 0 20 17">
<polygon points="1,1.3 18.7,1.3 9.6,15.5" fill="none" stroke="#4a7ffa" stroke-width="1.4" stroke-linejoin="round"/><path d="M3.7,5.8 H15.8 M6.6,10.5 H12.8" stroke="#4a7ffa" stroke-width="1.3"/></svg>
<div class="t" style="left:264px;top:868px;font-size:16px;line-height:16px;color:#303030;font-weight:bold;">销售漏斗 (商机组：系统默认)</div>
<div class="a" style="left:1493px;top:865px;width:90px;height:24px;background:#dddddd;border-radius:4px"></div>
<div class="t" style="left:1503px;top:870px;font-size:13px;line-height:13px;color:#666;font-weight:normal;">系统默认</div>
<svg style="left:1561px;top:874px" width="10" height="6" viewBox="0 0 10 6"><path d="M0.5,0.5 L5,5 L9.5,0.5" stroke="#777" stroke-width="1" fill="none"/></svg>
<div class="t" style="left:786px;top:1183px;font-size:14px;line-height:14px;color:#6ca0f8;font-weight:normal;">赢单</div>
<div class="t" style="left:789px;top:1205px;font-size:14px;line-height:14px;color:#6ca0f8;font-weight:normal;">0元</div>
<div class="t" style="left:1002px;top:1183px;font-size:14px;line-height:14px;color:#ff7a7a;font-weight:normal;">输单</div>
<div class="t" style="left:1005px;top:1205px;font-size:14px;line-height:14px;color:#ff7a7a;font-weight:normal;">0元</div>
<div class="card" style="left:1616px;top:844px;width:911px;height:400px"></div>
<svg style="left:1634px;top:867px" width="17" height="17" viewBox="0 0 17 17">
<path d="M1,4 V1 H15 V12 H1 V9" stroke="#4a7ffa" stroke-width="1.2" fill="none" stroke-linejoin="round"/><path d="M1,7 L5.2,4 L7.5,7 L12.5,3.8" stroke="#4a7ffa" stroke-width="1.3" fill="none" stroke-linejoin="round" stroke-linecap="round"/>
<rect x="7.2" y="12" width="1.6" height="3.5" fill="#4a7ffa"/><path d="M0.3,15.5 H15.8" stroke="#4a7ffa" stroke-width="1.2" stroke-linecap="round"/></svg>
<div class="t" style="left:1656px;top:868px;font-size:16px;line-height:16px;color:#303030;font-weight:bold;">业绩指标完成率 (回款金额)</div>
<div class="a" style="left:2424px;top:865px;width:90px;height:24px;background:#dddddd;border-radius:4px"></div>
<div class="t" style="left:2434px;top:870px;font-size:13px;line-height:13px;color:#666;font-weight:normal;">回款金额</div>
<svg style="left:2492px;top:874px" width="10" height="6" viewBox="0 0 10 6"><path d="M0.5,0.5 L5,5 L9.5,0.5" stroke="#777" stroke-width="1" fill="none"/></svg>
<svg style="left:0;top:0" width="2554" height="1269"><path d="M1993.40,1139.40 A113,113 0 0 1 1961.69,1041.82" stroke="#ff7474" stroke-width="16" fill="none"/><path d="M1961.69,1041.82 A113,113 0 0 1 2184.91,1041.82" stroke="#fdc952" stroke-width="16" fill="none"/><path d="M2184.91,1041.82 A113,113 0 0 1 2153.20,1139.40" stroke="#47e38b" stroke-width="16" fill="none"/><polygon points="2012.1,1120.7 2077,1063 2080,1054 2071,1058" fill="#5f8299"/></svg>
<div class="t" style="left:1983.4px;top:1123.0px;width:40px;text-align:center;font-size:10px;line-height:10px;color:#ff7474">0</div>
<div class="t" style="left:1961.0px;top:1086.0px;width:40px;text-align:center;font-size:10px;line-height:10px;color:#ff7474">10</div>
<div class="t" style="left:1957.0px;top:1038.6px;width:40px;text-align:center;font-size:10px;line-height:10px;color:#ff7474">20</div>
<div class="t" style="left:1975.8px;top:998.3px;width:40px;text-align:center;font-size:10px;line-height:10px;color:#fdc952">30</div>
<div class="t" style="left:2012.0px;top:967.5px;width:40px;text-align:center;font-size:10px;line-height:10px;color:#fdc952">40</div>
<div class="t" style="left:2053.8px;top:956.7px;width:40px;text-align:center;font-size:10px;line-height:10px;color:#fdc952">50</div>
<div class="t" style="left:2095.0px;top:967.5px;width:40px;text-align:center;font-size:10px;line-height:10px;color:#fdc952">60</div>
<div class="t" style="left:2131.3px;top:998.3px;width:40px;text-align:center;font-size:10px;line-height:10px;color:#fdc952">70</div>
<div class="t" style="left:2149.9px;top:1038.6px;width:40px;text-align:center;font-size:10px;line-height:10px;color:#fdc952">80</div>
<div class="t" style="left:2146.0px;top:1086.0px;width:40px;text-align:center;font-size:10px;line-height:10px;color:#47e38b">90</div>
<div class="t" style="left:2118.0px;top:1123.0px;width:40px;text-align:center;font-size:10px;line-height:10px;color:#47e38b">100</div>
<div class="t" style="left:2033px;top:1004px;width:80px;text-align:center;font-size:13px;line-height:13px;color:#666">完成率</div>
<div class="t" style="left:2023px;top:1095px;width:100px;text-align:center;font-size:21px;line-height:21px;color:#5f8299;font-weight:bold">0%</div>
<div class="t" style="left:1962px;top:1179px;font-size:14px;line-height:14px;color:#333;font-weight:normal;">目标</div>
<div class="t" style="left:1955px;top:1204px;font-size:14px;line-height:14px;color:#333;font-weight:normal;">0.00元</div>
<div class="t" style="left:2140px;top:1179px;font-size:14px;line-height:14px;color:#333;font-weight:normal;">回款金额</div>
<div class="t" style="left:2147px;top:1204px;font-size:14px;line-height:14px;color:#333;font-weight:normal;">0.00元</div>
<div class="t" style="left:2232px;top:1184px;font-size:21px;line-height:21px;color:#c8c8c8;font-weight:normal;letter-spacing:0.25px">激活 Windows</div>
<div class="t" style="left:2232px;top:1211px;font-size:15px;line-height:15px;color:#c8c8c8;font-weight:normal;letter-spacing:0.45px">转到“设置”以激活 Windows。</div>
<svg style="left:1229px;top:1253px" width="14" height="14" viewBox="0 0 20 20">
<circle cx="10" cy="10" r="9.85" fill="#a8a8a8"/><circle cx="10" cy="10" r="8.7" fill="none" stroke="#fff" stroke-width="0.9"/>
<path d="M3.5,5.8 Q3.5,3.9 6,3.9 H8.8 L10,4.9 L11.2,3.9 H14 Q16.4,3.9 16.4,5.8 V8.8 Q16.4,11 14.4,11 H13.4 V14.3 Q13.4,16.7 10,16.7 Q6.6,16.7 6.6,14.3 V11 H5.5 Q3.5,11 3.5,8.8 Z" fill="#fff"/>
<rect x="7" y="7" width="2" height="2" fill="#a8a8a8"/><rect x="11" y="7" width="2" height="2" fill="#a8a8a8"/></svg>
<div class="t" style="left:1248px;top:1253px;font-size:12px;line-height:12px;color:#999;font-weight:normal;">Power by 悟空</div>
</body></html>
